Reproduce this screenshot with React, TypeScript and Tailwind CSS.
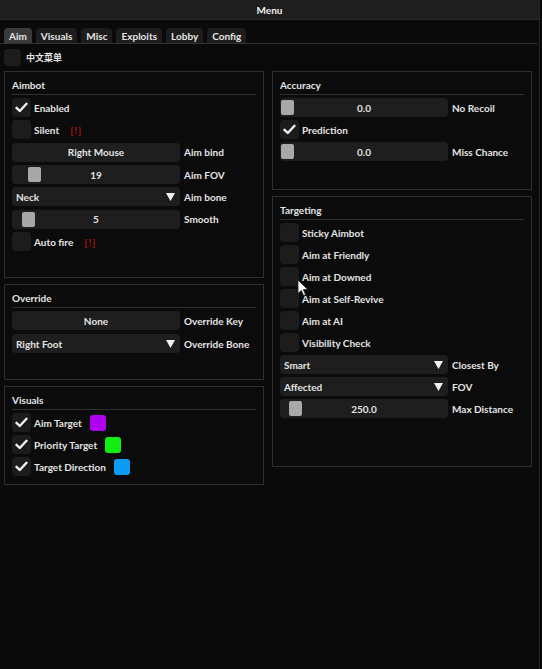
import type { ReactNode } from 'react'

const font = { fontFamily: 'Lato, "Noto Sans CJK SC", sans-serif' }

function Check({ on }: { on?: boolean }) {
  return (
    <div className="w-[19px] h-[19px] shrink-0 rounded-[4px] bg-[#1c1c1c] flex items-center justify-center">
      {on && (
        <svg width="13" height="11" viewBox="0 0 13 11">
          <path d="M1.5 5.8 L4.8 9 L11.5 1.8" fill="none" stroke="#f2f2f2" strokeWidth="2.4" strokeLinecap="round" strokeLinejoin="round" />
        </svg>
      )}
    </div>
  )
}

function CheckRow({ on, label, warn, swatch }: { on?: boolean; label: string; warn?: boolean; swatch?: string }) {
  return (
    <div className="flex items-center h-[19px]">
      <Check on={on} />
      <span className="ml-[3px]">{label}</span>
      {warn && <span className="ml-[11px] text-[#b01010] tracking-[1px]">[!]</span>}
      {swatch && <div className={`ml-[8px] w-[16px] h-[16px] rounded-[3px] ${swatch}`} />}
    </div>
  )
}

function Labeled({ children, label }: { children: ReactNode; label: string }) {
  return (
    <div className="flex items-center h-[19px]">
      <div className="w-[168px] h-[19px] shrink-0">{children}</div>
      <span className="ml-[4px] whitespace-nowrap">{label}</span>
    </div>
  )
}

function Button({ text }: { text: string }) {
  return <div className="h-full rounded-[4px] bg-[#1e1e1e] flex items-center justify-center">{text}</div>
}

function Slider({ value, pos }: { value: string; pos: number }) {
  return (
    <div className="relative h-full rounded-[4px] bg-[#1e1e1e] flex items-center justify-center">
      <div className="absolute top-[2px] w-[13px] h-[15px] rounded-[2px] bg-[#a8a8a8]" style={{ left: pos }} />
      <span className="relative">{value}</span>
    </div>
  )
}

function Combo({ value }: { value: string }) {
  return (
    <div className="h-full rounded-[4px] bg-[#1e1e1e] flex items-center justify-between pl-[4px] pr-[5px]">
      <span>{value}</span>
      <svg width="9" height="8" viewBox="0 0 9 8">
        <path d="M0 0 H9 L4.5 8 Z" fill="#f0f0f0" />
      </svg>
    </div>
  )
}

function Panel({ title, h, gap, children }: { title: string; h: string; gap?: string; children: ReactNode }) {
  return (
    <div className={`border border-[#2e2e2e] bg-[#0b0b0b] px-[7px] pt-[6px] ${h}`}>
      <div className="h-[14px] leading-[14px]">{title}</div>
      <div className="mt-[2px] h-px bg-[#2f2f2f]" />
      <div className={`mt-[3px] flex flex-col ${gap ?? 'gap-[3px]'}`}>{children}</div>
    </div>
  )
}

const tabs = ['Aim', 'Visuals', 'Misc', 'Exploits', 'Lobby', 'Config']

export default function App() {
  return (
    <div className="relative w-[542px] h-[669px] bg-[#080808] text-[#e4e4e4] text-[10px] font-bold leading-none overflow-hidden" style={font}>
      <div className="w-[540px] h-full border-r border-[#262626] bg-[#0a0a0a] flex flex-col">
        <div className="h-[20px] shrink-0 bg-[#1e1e1e] border-b border-[#2a2a2a] flex items-center justify-center text-[#f0f0f0]">
          Menu
        </div>

        <div className="mt-[8px] px-[4px] flex gap-[4px] border-b border-[#333] w-[537px]">
          {tabs.map((t, i) => (
            <div
              key={t}
              className={`h-[15px] px-[5px] rounded-t-[4px] flex items-center ${i === 0 ? 'bg-[#3a3a3a]' : 'bg-[#1c1c1c]'}`}
            >
              {t}
            </div>
          ))}
        </div>

        <div className="mt-[5px] px-[4px] flex items-center">
          <div className="w-[17px] h-[17px] rounded-[4px] bg-[#1c1c1c]" />
          <span className="ml-[5px] text-[9px]">中文菜单</span>
        </div>

        <div className="mt-[5px] px-[4px] flex gap-[8px]">
          <div className="w-[260px] flex flex-col gap-[6px]">
            <Panel title="Aimbot" h="h-[207px]" gap="gap-[3.35px]">
              <CheckRow on label="Enabled" />
              <CheckRow label="Silent" warn />
              <Labeled label="Aim bind">
                <Button text="Right Mouse" />
              </Labeled>
              <Labeled label="Aim FOV">
                <Slider value="19" pos={16} />
              </Labeled>
              <Labeled label="Aim bone">
                <Combo value="Neck" />
              </Labeled>
              <Labeled label="Smooth">
                <Slider value="5" pos={10} />
              </Labeled>
              <CheckRow label="Auto fire" warn />
            </Panel>
            <Panel title="Override" h="h-[96px]" gap="gap-[4px]">
              <Labeled label="Override Key">
                <Button text="None" />
              </Labeled>
              <Labeled label="Override Bone">
                <Combo value="Right Foot" />
              </Labeled>
            </Panel>
            <Panel title="Visuals" h="h-[99px]">
              <CheckRow on label="Aim Target" swatch="bg-[#b000f0]" />
              <CheckRow on label="Priority Target" swatch="bg-[#10ee10]" />
              <CheckRow on label="Target Direction" swatch="bg-[#0c9cf4]" />
            </Panel>
          </div>

          <div className="w-[260px] flex flex-col gap-[6px]">
            <Panel title="Accuracy" h="h-[119px]">
              <Labeled label="No Recoil">
                <Slider value="0.0" pos={1} />
              </Labeled>
              <CheckRow on label="Prediction" />
              <Labeled label="Miss Chance">
                <Slider value="0.0" pos={1} />
              </Labeled>
            </Panel>
            <Panel title="Targeting" h="h-[271px]">
              <CheckRow label="Sticky Aimbot" />
              <CheckRow label="Aim at Friendly" />
              <CheckRow label="Aim at Downed" />
              <CheckRow label="Aim at Self-Revive" />
              <CheckRow label="Aim at AI" />
              <CheckRow label="Visibility Check" />
              <Labeled label="Closest By">
                <Combo value="Smart" />
              </Labeled>
              <Labeled label="FOV">
                <Combo value="Affected" />
              </Labeled>
              <Labeled label="Max Distance">
                <Slider value="250.0" pos={9} />
              </Labeled>
            </Panel>
          </div>
        </div>
      </div>

      <svg className="absolute left-[297px] top-[279px]" width="12" height="18" viewBox="0 0 12 18">
        <path d="M1 1 V14.5 L4.3 11.4 L6.6 16.6 L8.6 15.7 L6.3 10.6 H10.8 Z" fill="#ffffff" stroke="#222" strokeWidth="0.8" />
      </svg>
    </div>
  )
}
